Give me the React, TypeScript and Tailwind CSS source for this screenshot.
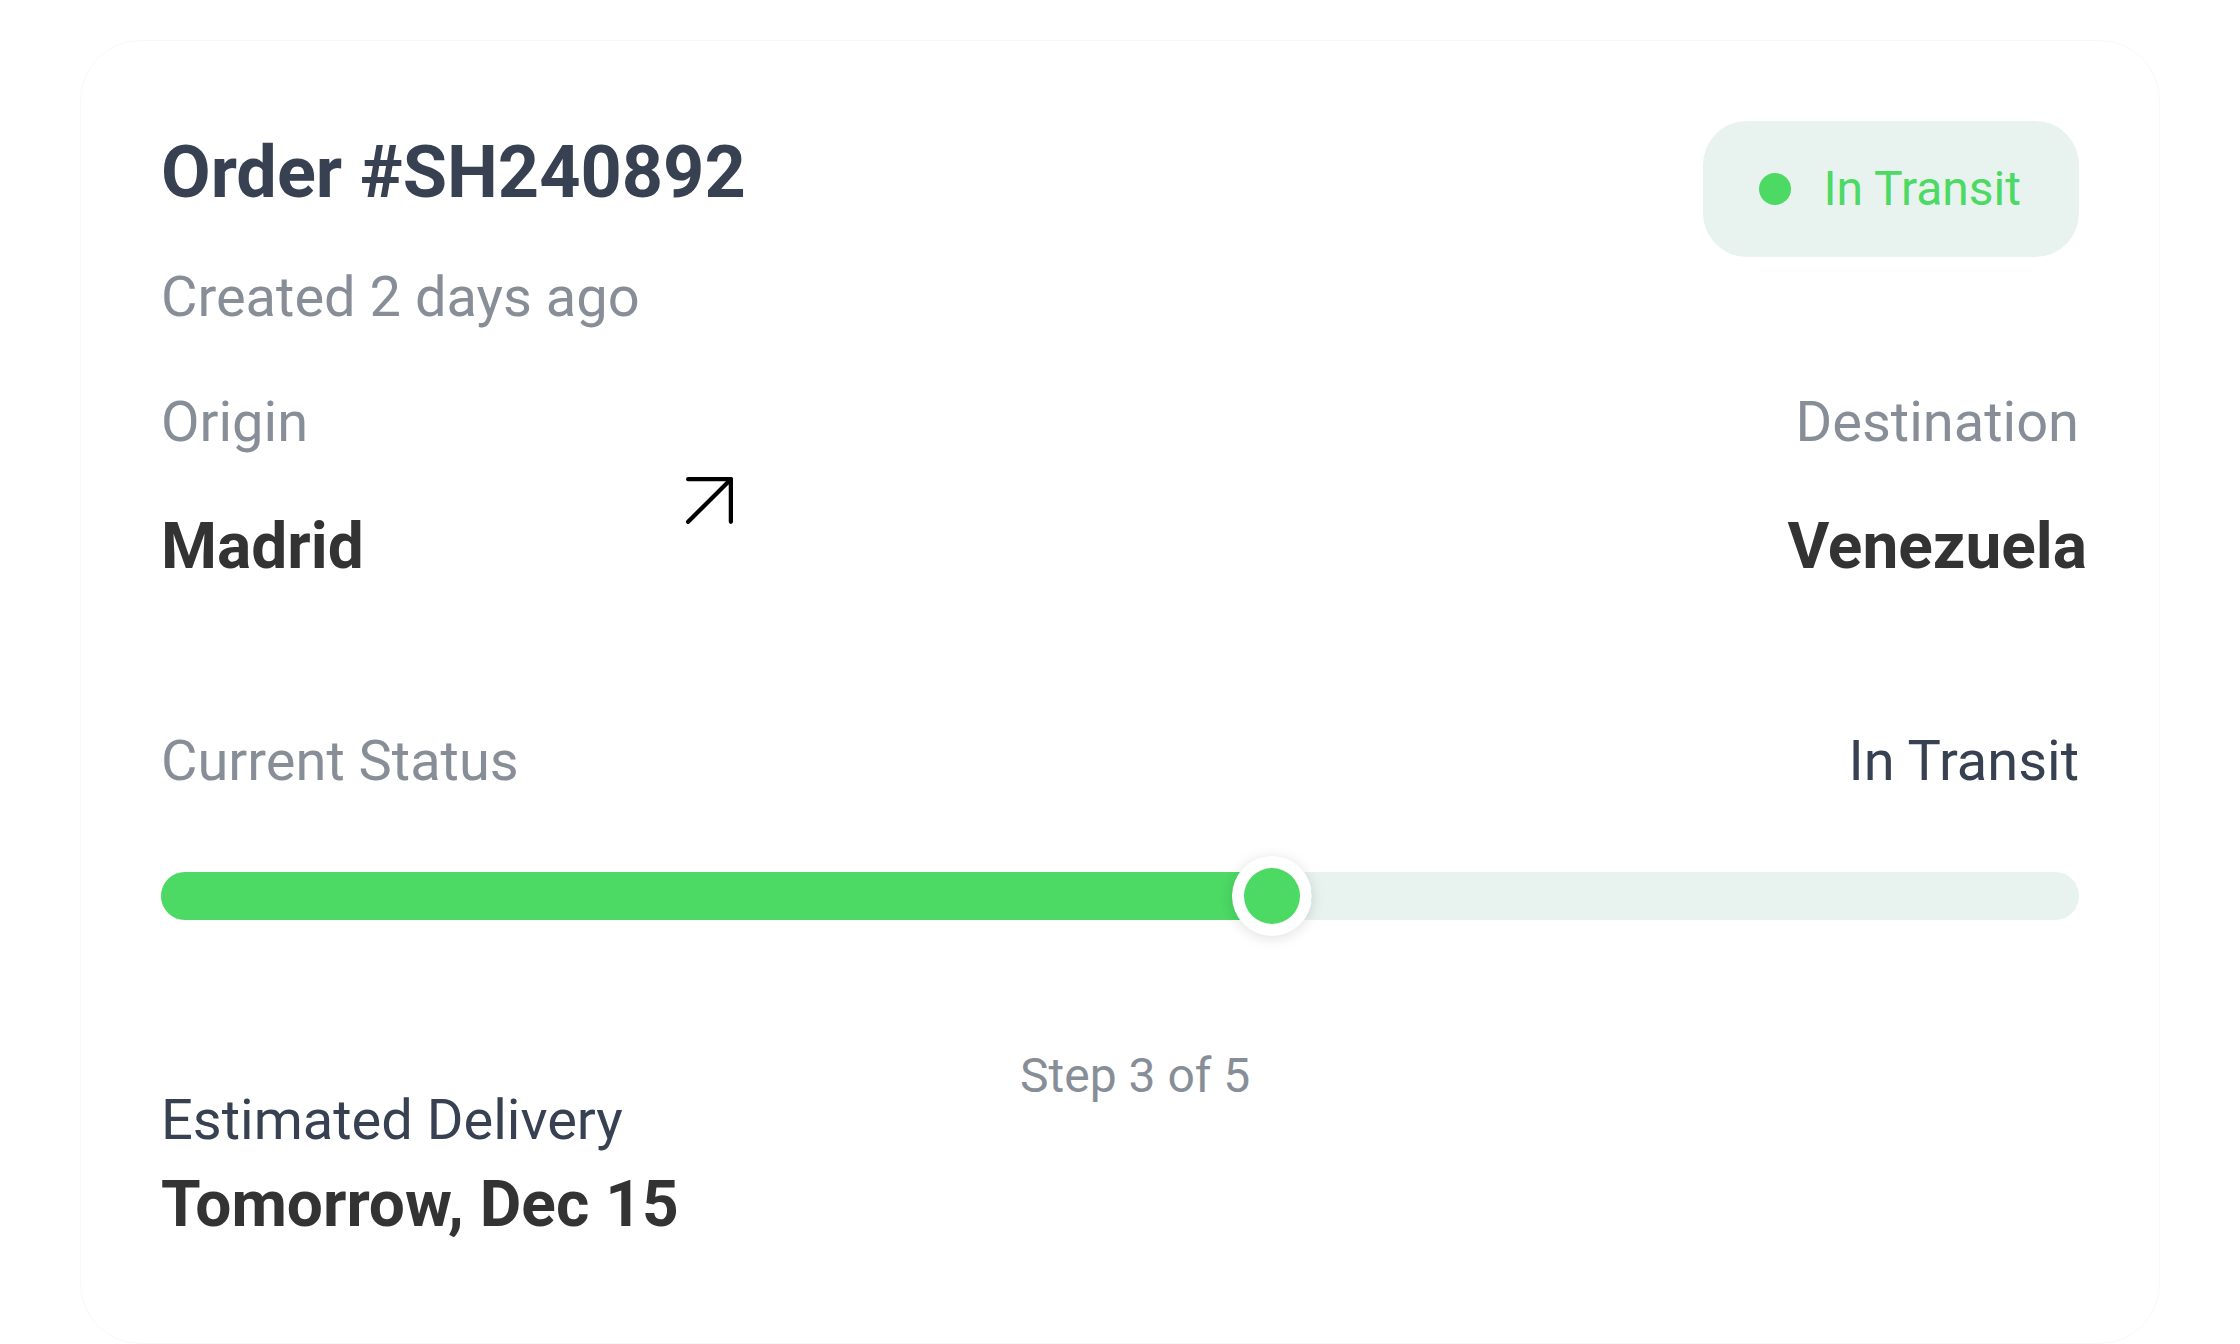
import React from 'react'

const font = { fontFamily: 'Roboto, "Liberation Sans", sans-serif' }

function ArrowUpRight() {
  return (
    <svg width="47" height="47" viewBox="-0.5 -0.5 11 11" fill="none" stroke="#000" strokeWidth="1" strokeLinecap="round" strokeLinejoin="round">
      <path d="M0 0h10v10" />
      <path d="M0 10 10 0" />
    </svg>
  )
}

function StatusBadge({ label }: { label: string }) {
  return (
    <div className="flex h-[136px] items-center gap-[32px] rounded-[44px] bg-[#e8f2ee] pl-[56px] pr-[58px]">
      <span className="h-8 w-8 rounded-full bg-[#4cd964]" />
      <span className="text-[48px] leading-[56px] text-[#4cd964]">{label}</span>
    </div>
  )
}

function ProgressBar({ percent }: { percent: number }) {
  return (
    <div className="h-12 w-full rounded-full bg-[#e8f2ee]">
      <div className="relative h-full rounded-full bg-[#4cd964]" style={{ width: `${percent}%` }}>
        {/* Thumb sits at the end of the fill */}
        <div className="absolute right-0 top-1/2 flex h-20 w-20 -translate-y-1/2 items-center justify-center rounded-full bg-white shadow-[0_2px_14px_rgba(0,0,0,0.13)]">
          <div className="h-14 w-14 rounded-full bg-[#4cd964]" />
        </div>
      </div>
    </div>
  )
}

export default function App() {
  return (
    <div className="min-h-screen bg-white pt-[40px]" style={font}>
      <div className="mx-[80px] rounded-[60px] border border-[#f8f8f8] bg-white px-[80px] pb-[102px] pt-[80px]">
        {/* Header */}
        <div className="flex items-start justify-between">
          <div className="pt-[12px]">
            <h1 className="text-[72px] font-bold leading-[80px] text-[#374151]">Order #SH240892</h1>
            <p className="mt-[52px] text-[56px] leading-[64px] text-[#878e97]">Created 2 days ago</p>
          </div>
          <StatusBadge label="In Transit" />
        </div>

        {/* Route */}
        <div className="mt-[61px] flex items-start justify-between">
          <div className="flex items-start">
            <div className="w-[525px]">
              <p className="text-[56px] leading-[64px] text-[#878e97]">Origin</p>
              <p className="mt-[57px] text-[64px] font-bold leading-[72px] text-[#333333]">Madrid</p>
            </div>
            <div className="mt-[87px]">
              <ArrowUpRight />
            </div>
          </div>
          <div className="flex flex-col items-end">
            <p className="text-[56px] leading-[64px] text-[#878e97]">Destination</p>
            <p className="-mr-[8px] mt-[57px] text-[64px] font-bold leading-[72px] text-[#333333]">Venezuela</p>
          </div>
        </div>

        {/* Status */}
        <div className="mt-[146px] flex items-center justify-between">
          <p className="text-[56px] leading-[64px] text-[#878e97]">Current Status</p>
          <p className="text-[56px] leading-[64px] text-[#374151]">In Transit</p>
        </div>

        <div className="mt-[79px]">
          <ProgressBar percent={60} />
        </div>

        {/* Footer */}
        <div className="mt-[128px] flex items-start">
          <div className="w-[859px] pt-[40px]">
            <p className="text-[56px] leading-[64px] text-[#374151]">Estimated Delivery</p>
            <p className="mt-[17px] text-[64px] font-bold leading-[72px] text-[#333333]">Tomorrow, Dec 15</p>
          </div>
          <p className="text-[48px] leading-[56px] text-[#878e97]">Step 3 of 5</p>
        </div>
      </div>
    </div>
  )
}
